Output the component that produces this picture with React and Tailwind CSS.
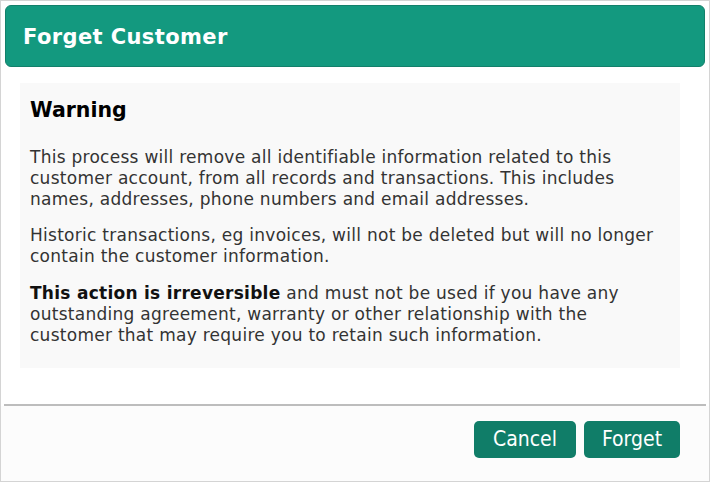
export default function App() {
  return (
    <div className="h-[482px] w-[710px] overflow-hidden bg-white font-['DejaVu_Sans',Verdana,sans-serif]">
      <div className="flex h-full flex-col border border-[#d4d4d4] bg-white">
        <div className="mx-[4px] mt-[4px] flex h-[62px] items-center rounded-[6px] border border-[#13806b] bg-[#13997f] px-[17px] pt-[3px]">
          <h1 className="text-[21px] font-bold tracking-[0.4px] text-white">Forget Customer</h1>
        </div>

        <div className="pl-[19px] pr-[29px] pt-[16px]">
          <div className="h-[285px] bg-[#f9f9f9] px-[10px] pt-[15px] text-[17px] leading-[21px] tracking-[0.27px] text-[#333]">
            <h2 className="text-[20.5px] font-bold leading-[24px] tracking-normal text-black">Warning</h2>
            <p className="mt-[25px]">
              This process will remove all identifiable information related to this
              <br />
              customer account, from all records and transactions. This includes
              <br />
              names, addresses, phone numbers and email addresses.
            </p>
            <p className="mt-[15px]">
              Historic transactions, eg invoices, will not be deleted but will no longer
              <br />
              contain the customer information.
            </p>
            <p className="mt-[16px]">
              <strong className="text-[#111]">This action is irreversible</strong> and must not be used if you have any
              <br />
              outstanding agreement, warranty or other relationship with the
              <br />
              customer that may require you to retain such information.
            </p>
          </div>
        </div>

        <div className="mx-[3px] mt-[36px] border-t-2 border-[#bdbdbd]" />

        <div className="flex flex-1 justify-end gap-[8px] bg-[#fcfcfc] pr-[29px] pt-[15px]">
          <button className="h-[37px] w-[102px] rounded-[5px] bg-[#107d68] font-['Liberation_Sans_Narrow','DejaVu_Sans_Condensed',sans-serif] text-[21px] text-white">
            Cancel
          </button>
          <button className="h-[37px] w-[96px] rounded-[5px] bg-[#107d68] font-['Liberation_Sans_Narrow','DejaVu_Sans_Condensed',sans-serif] text-[21px] text-white">
            Forget
          </button>
        </div>
      </div>
    </div>
  );
}
